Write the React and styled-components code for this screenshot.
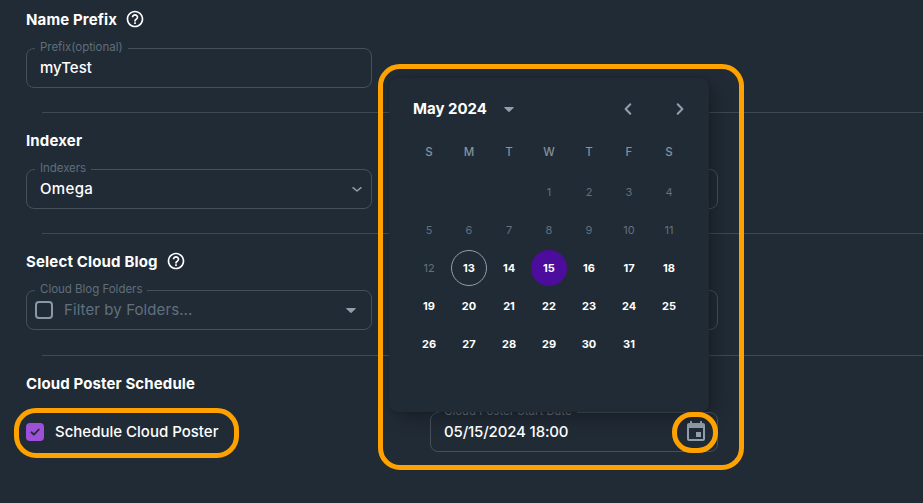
import React from 'react';
import styled, { createGlobalStyle } from 'styled-components';

const Global = createGlobalStyle`
  * { box-sizing: border-box; }
  body {
    margin: 0;
    background: #212b35;
    color: #fff;
    font-family: Inter, sans-serif;
    overflow: hidden;
  }
`;

const Page = styled.main`
  position: relative;
  display: flex;
  flex-direction: column;
  height: 503px;
  overflow: hidden;
`;

const Section = styled.section`
  display: flex;
  flex-direction: column;
  padding-top: ${(p) => p.$top ?? 16}px;
`;

const Heading = styled.h2`
  display: flex;
  align-items: center;
  gap: 8px;
  height: 22px;
  margin: 0 0 18px 26px;
  font-size: 15px;
  font-weight: 700;
  letter-spacing: ${(p) => p.$spacing ?? 0}px;
  white-space: nowrap;
`;

const FieldRow = styled.div`
  display: grid;
  grid-template-columns: 346px 288px;
  column-gap: 58px;
  height: 40px;
  margin-left: 26px;
`;

const Field = styled.div`
  position: relative;
  display: flex;
  align-items: center;
  justify-content: space-between;
  height: 40px;
  padding: 0 ${(p) => p.$right ?? 13}px 0 ${(p) => p.$left ?? 13}px;
  border: 1px solid #45505b;
  border-radius: 8px;
`;

const FieldLabel = styled.span`
  position: absolute;
  top: -9px;
  left: 8px;
  padding: 0 5px;
  background: #212b35;
  color: #5f6e7c;
  font-size: 11.5px;
  line-height: 15px;
  letter-spacing: ${(p) => p.$spacing ?? 0}px;
  white-space: nowrap;
`;

const Value = styled.span`
  flex: 1;
  font-size: 15px;
  font-weight: 500;
  line-height: 20px;
  letter-spacing: ${(p) => p.$spacing ?? 0}px;
  white-space: nowrap;
`;

const Placeholder = styled(Value)`
  margin-left: 11px;
  color: #61707e;
  font-weight: 400;
`;

const Divider = styled.hr`
  width: 100%;
  height: 1px;
  margin: ${(p) => p.$gap ?? 24}px 0 0 42px;
  border: 0;
  background: #3e4953;
`;

const EmptyBox = styled.span`
  width: 18px;
  height: 18px;
  border: 2px solid #8b98a5;
  border-radius: 4px;
`;

const CheckLabel = styled.label`
  display: flex;
  align-items: center;
  gap: 11px;
`;

const CheckedBox = styled.span`
  display: flex;
  width: 18px;
  height: 18px;
  border-radius: 4px;
  background: #9d50d8;
`;

const Icon = styled.svg`
  display: block;
  flex: none;
  width: ${(p) => p.$size ?? 24}px;
  height: ${(p) => p.$size ?? 24}px;
  fill: ${(p) => p.$color ?? '#919eab'};
`;

const Popover = styled.div`
  position: absolute;
  top: 78px;
  left: 389px;
  width: 320px;
  height: 334px;
  border-radius: 8px;
  background: #212b35;
  box-shadow: 0 0 2px rgba(0, 0, 0, 0.24), 6px 6px 20px -4px rgba(0, 0, 0, 0.4);
`;

const CalendarHeader = styled.div`
  display: flex;
  align-items: center;
  height: 30px;
  margin-top: 16px;
  padding: 0 17px 0 24px;
`;

const Month = styled.span`
  width: 84px;
  padding-bottom: 2px;
  font-size: 15px;
  font-weight: 700;
  letter-spacing: 0;
  white-space: nowrap;
`;

const Arrows = styled.div`
  display: flex;
  gap: 28px;
  margin-left: auto;
`;

const Grid = styled.div`
  display: grid;
  grid-template-columns: repeat(7, 40px);
  grid-auto-rows: ${(p) => p.$row}px;
  justify-content: center;
  justify-items: center;
  align-items: center;
  margin-top: ${(p) => p.$top}px;
`;

const Weekday = styled.span`
  color: #84919e;
  font-size: 11.5px;
  font-weight: 500;
`;

const Day = styled.span`
  display: flex;
  align-items: center;
  justify-content: center;
  width: 36px;
  height: 36px;
  border: ${(p) => (p.$today ? '1px solid #919eab' : '0')};
  border-radius: 50%;
  background: ${(p) => (p.$selected ? '#4c0c9c' : 'transparent')};
  color: ${(p) => (p.$past ? '#61707e' : '#fff')};
  font-size: 11px;
  font-weight: ${(p) => (p.$past ? 400 : 700)};
`;

const Highlight = styled.div`
  position: absolute;
  top: ${(p) => p.$y}px;
  left: ${(p) => p.$x}px;
  width: ${(p) => p.$w}px;
  height: ${(p) => p.$h}px;
  border: 5px solid #ffa200;
  border-radius: ${(p) => p.$r}px;
  pointer-events: none;
`;

const HelpIcon = () => (
  <Icon viewBox="0 0 24 24" $size={20} $color="#fff">
    <path d="M11 18h2v-2h-2v2zm1-16C6.48 2 2 6.48 2 12s4.48 10 10 10 10-4.48 10-10S17.52 2 12 2zm0 18c-4.41 0-8-3.59-8-8s3.59-8 8-8 8 3.59 8 8-3.59 8-8 8zm0-14c-2.21 0-4 1.79-4 4h2c0-1.1.9-2 2-2s2 .9 2 2c0 2-3 1.75-3 5h2c0-2.25 3-2.5 3-5 0-2.21-1.79-4-4-4z" />
  </Icon>
);

const DropArrow = () => (
  <Icon viewBox="0 0 24 24">
    <path d="M7.700 10h8.600c.5 0 .7.5.4.8l-4.200 4c-.3.3-.7.3-1 0l-4.200-4c-.3-.3-.1-.8.4-.8z" />
  </Icon>
);

const days = Array.from({ length: 31 }, (_, i) => i + 1);

export default function App() {
  return (
    <>
      <Global />
      <Page>
        <Section $top={8}>
          <Heading $spacing={0.13}>Name Prefix <HelpIcon /></Heading>
          <FieldRow>
            <Field>
              <FieldLabel $spacing={-0.04}>Prefix(optional)</FieldLabel>
              <Value>myTest</Value>
            </Field>
          </FieldRow>
          <Divider />
        </Section>

        <Section>
          <Heading $spacing={0.15}>Indexer</Heading>
          <FieldRow>
            <Field $right={8}>
              <FieldLabel $spacing={-0.06}>Indexers</FieldLabel>
              <Value $spacing={0.35}>Omega</Value>
              <Icon viewBox="0 0 12 12" $size={12}>
                <path d="M2 4.700 6 8l4-3.300" fill="none" stroke="#919eab" strokeWidth="1.500" strokeLinecap="round" strokeLinejoin="round" />
              </Icon>
            </Field>
            <Field />
          </FieldRow>
          <Divider />
        </Section>

        <Section>
          <Heading $spacing={0.16}>Select Cloud Blog <HelpIcon /></Heading>
          <FieldRow>
            <Field $left={8} $right={8}>
              <FieldLabel $spacing={-0.02}>Cloud Blog Folders</FieldLabel>
              <EmptyBox />
              <Placeholder $spacing={0.09}>Filter by Folders...</Placeholder>
              <DropArrow />
            </Field>
            <Field />
          </FieldRow>
          <Divider $gap={25} />
        </Section>

        <Section>
          <Heading $spacing={0.12}>Cloud Poster Schedule</Heading>
          <FieldRow>
            <CheckLabel>
              <CheckedBox>
                <Icon viewBox="0 0 18 18" $size={18}>
                  <path d="M5.500 9.300 7.900 11.700 12.800 6.500" fill="none" stroke="#212b35" strokeWidth="1.800" strokeLinecap="round" strokeLinejoin="round" />
                </Icon>
              </CheckedBox>
              <Value>Schedule Cloud Poster</Value>
            </CheckLabel>
            <Field $right={9}>
              <FieldLabel>Cloud Poster Start Date</FieldLabel>
              <Value $spacing={-0.16}>05/15/2024 18:00</Value>
              <Icon viewBox="0 0 24 24">
                <path d="M17 12h-5v5h5v-5zM16 1v2H8V1H6v2H5c-1.110 0-1.990.9-1.990 2L3 19c0 1.100.890 2 2 2h14c1.100 0 2-.9 2-2V5c0-1.100-.9-2-2-2h-1V1h-2zm3 18H5V8h14v11z" />
              </Icon>
            </Field>
          </FieldRow>
        </Section>

        <Popover>
          <CalendarHeader>
            <Month>May 2024</Month>
            <DropArrow />
            <Arrows>
              <Icon viewBox="0 0 24 24">
                <path d="M14.300 7.300 9.600 12l4.700 4.700" fill="none" stroke="#919eab" strokeWidth="2" strokeLinecap="round" strokeLinejoin="round" />
              </Icon>
              <Icon viewBox="0 0 24 24">
                <path d="M9.700 7.300l4.700 4.700-4.700 4.700" fill="none" stroke="#919eab" strokeWidth="2" strokeLinecap="round" strokeLinejoin="round" />
              </Icon>
            </Arrows>
          </CalendarHeader>
          <Grid $row={40} $top={8}>
            {['S', 'M', 'T', 'W', 'T', 'F', 'S'].map((d, i) => (
              <Weekday key={i}>{d}</Weekday>
            ))}
          </Grid>
          <Grid $row={38} $top={1}>
            <span /><span /><span />
            {days.map((d) => (
              <Day key={d} $past={d < 13} $today={d === 13} $selected={d === 15}>{d}</Day>
            ))}
          </Grid>
        </Popover>

        <Highlight $x={378} $y={64} $w={366} $h={406} $r={22} />
        <Highlight $x={14} $y={408} $w={225} $h={50} $r={22} />
        <Highlight $x={672} $y={412} $w={46} $h={41} $r={20} />
      </Page>
    </>
  );
}
